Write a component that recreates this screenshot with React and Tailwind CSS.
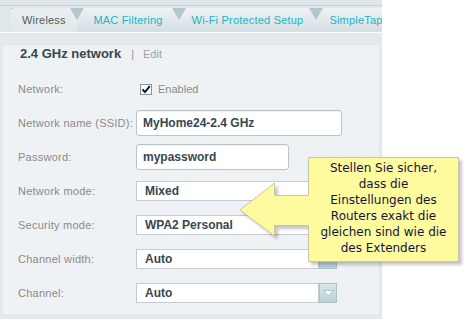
import React from "react";

function Tab({ children, className, active, first }) {
  const clip = first
    ? "[clip-path:polygon(0_0,calc(100%_-_7px)_0,100%_50%,100%_100%,0_100%)]"
    : "[clip-path:polygon(7px_0,calc(100%_-_7px)_0,100%_50%,100%_100%,0_100%,0_50%)]";
  return (
    <div
      className={
        "shrink-0 h-full flex items-center text-[11px] tracking-[0.2px] " +
        clip +
        " " +
        (active
          ? "bg-linear-to-b from-[#eaeff1] to-[#e2e8eb] text-[#555b5f] rounded-tl-[3px] pl-[11px]"
          : "bg-linear-to-b from-[#eef3f5] to-[#d4dfe3] text-[#22b3c8] justify-center") +
        " " +
        className
      }
    >
      {children}
    </div>
  );
}

function Label({ children }) {
  return <div className="w-[118px] shrink-0 text-[11px] tracking-[0.25px] text-[#8a8a8a]">{children}</div>;
}

function Row({ label, children }) {
  return (
    <div className="h-[34px] flex items-center">
      <Label>{label}</Label>
      {children}
    </div>
  );
}

function TextInput({ value, w }) {
  return (
    <div
      className={
        "h-[26px] rounded-[3px] border border-[#b9c5cb] bg-white flex items-center pl-[6px] text-[12px] font-bold text-[#37474f] shadow-[inset_0_1px_1px_rgba(0,0,0,0.06)] " +
        w
      }
    >
      {value}
    </div>
  );
}

function Select({ value }) {
  return (
    <div className="h-[20px] flex">
      <div className="w-[183px] h-full border border-[#c3ccd0] bg-white flex items-center pl-[8px] text-[12px] font-bold text-[#37474f]">
        {value}
      </div>
      <div className="w-[18px] h-full border border-[#aec3c8] bg-linear-to-b from-[#d9e8eb] to-[#b9d0d5] flex items-center justify-center">
        <svg width="11" height="7" viewBox="0 0 11 7">
          <polygon points="0.5,0.5 10.5,0.5 5.5,6" fill="#ffffff" stroke="#a4babf" strokeWidth="0.8" />
        </svg>
      </div>
    </div>
  );
}

export default function App() {
  return (
    <div className="relative w-[470px] h-[324px] bg-white overflow-hidden font-['Liberation_Sans',Arial,sans-serif]">
      <div className="w-[382px] h-[319px] bg-[#e3e9ec] flex flex-col overflow-hidden">
        <div className="h-[5px] shrink-0 bg-[#e0e7eb]" />
        <div className="h-px shrink-0 bg-[#c6d0d5]" />
        <div className="h-[2px] shrink-0 bg-[#e0e7eb]" />
        <div className="h-[24px] shrink-0 flex bg-[#b3c5cd]">
          <div className="w-[11px] shrink-0 bg-[#e0e7eb]" />
          <Tab active first className="w-[66px]">Wireless</Tab>
          <Tab className="w-[102px]">MAC Filtering</Tab>
          <Tab className="w-[137px]">Wi-Fi Protected Setup</Tab>
          <Tab className="w-[80px]">SimpleTap</Tab>
        </div>
        <div className="h-px shrink-0 bg-white" />
        <div className="h-[12px] shrink-0" />
        <div className="mx-[3px] flex-1 bg-[#eef2f4] pl-[15px] flex flex-col">
          <div className="h-[16px] flex items-center ml-[2px] mt-px">
            <span className="text-[13px] font-bold text-[#37474f]">2.4 GHz network</span>
            <span className="ml-[10px] text-[11px] text-[#8d9396]">|</span>
            <span className="ml-[9px] text-[11px] text-[#9a9fa2]">Edit</span>
          </div>
          <div className="h-[10px]" />
          <Row label="Network:">
            <div className="ml-[4px] w-[12px] h-[11px] border border-[#8296a0] bg-white flex items-center justify-center">
              <svg width="10" height="9" viewBox="0 0 10 9">
                <path d="M1.5 4.5 L4 7 L8.8 1.2" fill="none" stroke="#111" strokeWidth="1.9" />
              </svg>
            </div>
            <span className="ml-[6px] text-[11px] text-[#8a8a8a]">Enabled</span>
          </Row>
          <Row label="Network name (SSID):">
            <TextInput value="MyHome24-2.4 GHz" w="w-[206px]" />
          </Row>
          <Row label="Password:">
            <TextInput value="mypassword" w="w-[153px]" />
          </Row>
          <Row label="Network mode:">
            <Select value="Mixed" />
          </Row>
          <Row label="Security mode:">
            <Select value="WPA2 Personal" />
          </Row>
          <Row label="Channel width:">
            <Select value="Auto" />
          </Row>
          <Row label="Channel:">
            <Select value="Auto" />
          </Row>
        </div>
        <div className="h-[5px] shrink-0" />
      </div>

      {/* callout */}
      <svg
        className="absolute left-[238px] top-[155px] drop-shadow-[3px_3px_1.5px_rgba(0,0,0,0.22)]"
        width="228"
        height="114"
        viewBox="0 0 228 114"
      >
        <polygon
          points="70.5,2.5 220.5,2.5 220.5,106.5 70.5,106.5 70.5,70.5 36.5,70.5 36.5,81 2,55 36.5,28 36.5,40.5 70.5,40.5"
          fill="#fefb9f"
          stroke="#c6c6a6"
          strokeWidth="1"
        />
      </svg>
      <div className="absolute left-[308px] top-[160px] w-[151px] text-center text-[12px] leading-[16px] text-[#14143f] font-['DejaVu_Sans',Verdana,sans-serif]">
        Stellen Sie sicher,
        <br />
        dass die
        <br />
        Einstellungen des
        <br />
        Routers exakt die
        <br />
        gleichen sind wie die
        <br />
        des Extenders
      </div>
    </div>
  );
}
